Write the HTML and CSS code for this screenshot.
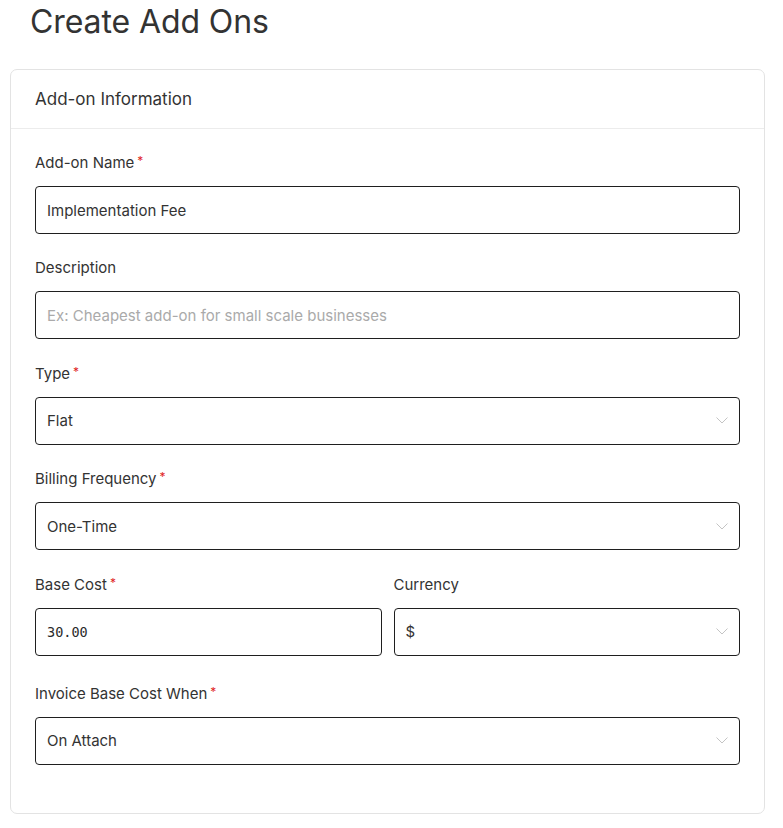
FILE: index.html
```html
<!DOCTYPE html>
<html>
<head>
<meta charset="utf-8">
<link rel="stylesheet" href="styles.css">
</head>
<body>
<div class="page">
  <h1 class="title">Create Add Ons</h1>
  <div class="card">
    <div class="card-header">Add-on Information</div>
    <div class="card-body">
      <div class="field">
        <div class="label">Add-on Name<span class="req">*</span></div>
        <div class="input">Implementation Fee</div>
      </div>
      <div class="field">
        <div class="label">Description</div>
        <div class="input placeholder">Ex: Cheapest add-on for small scale businesses</div>
      </div>
      <div class="field">
        <div class="label">Type<span class="req">*</span></div>
        <div class="input select">Flat<svg class="chev" viewBox="0 0 12 7"><path d="M0.5 0.5 L6 6 L11.5 0.5"/></svg></div>
      </div>
      <div class="field">
        <div class="label">Billing Frequency<span class="req">*</span></div>
        <div class="input select">One-Time<svg class="chev" viewBox="0 0 12 7"><path d="M0.5 0.5 L6 6 L11.5 0.5"/></svg></div>
      </div>
      <div class="row">
        <div class="field">
          <div class="label">Base Cost<span class="req">*</span></div>
          <div class="input mono">30.00</div>
        </div>
        <div class="field">
          <div class="label">Currency</div>
          <div class="input select">$<svg class="chev" viewBox="0 0 12 7"><path d="M0.5 0.5 L6 6 L11.5 0.5"/></svg></div>
        </div>
      </div>
      <div class="field">
        <div class="label">Invoice Base Cost When<span class="req">*</span></div>
        <div class="input select">On Attach<svg class="chev" viewBox="0 0 12 7"><path d="M0.5 0.5 L6 6 L11.5 0.5"/></svg></div>
      </div>
    </div>
  </div>
</div>
</body>
</html>
```

FILE: styles.css
```css
* { box-sizing: border-box; }
body {
  margin: 0;
  background: #fff;
  font-family: Inter, "Liberation Sans", sans-serif;
  color: #333;
}
.page {
  padding: 0 18px 14px 10px;
}
.title {
  margin: 0;
  padding: 3px 0 0 20px;
  height: 69px;
  font-size: 32px;
  font-weight: 400;
  color: #333;
  letter-spacing: -0.1px;
  line-height: 38px;
}
.card {
  border: 1px solid #e3e3e3;
  border-radius: 7px;
  background: #fff;
}
.card-header {
  height: 59px;
  padding: 0 24px;
  display: flex;
  align-items: center;
  font-size: 17px;
  color: #333;
  border-bottom: 1px solid #ececec;
}
.card-body {
  padding: 24px 24px 48px;
  display: flex;
  flex-direction: column;
  gap: 24.4px;
}
.field {
  display: flex;
  flex-direction: column;
  gap: 13px;
  min-width: 0;
}
.row {
  display: grid;
  grid-template-columns: 1fr 1fr;
  gap: 12px;
  margin-bottom: 4px;
}
.label {
  font-size: 15px;
  line-height: 20px;
  height: 20px;
  color: #333;
}
.req {
  color: #e02424;
  font-size: 12px;
  margin-left: 3px;
  position: relative;
  top: -3px;
}
.input {
  height: 48px;
  border: 1px solid #1f1f1f;
  border-radius: 4px;
  padding: 0 11px;
  display: flex;
  align-items: center;
  font-size: 15px;
  color: #333;
}
.placeholder { color: #aaa; font-size: 15px; }
.mono { font-family: "DejaVu Sans Mono", monospace; font-size: 13.5px; font-weight: 500; color: #2a2a2a; }
.select { justify-content: space-between; }
.chev {
  width: 12px;
  height: 7px;
  fill: none;
  stroke: #c4c4c4;
  stroke-width: 1;
}
```
